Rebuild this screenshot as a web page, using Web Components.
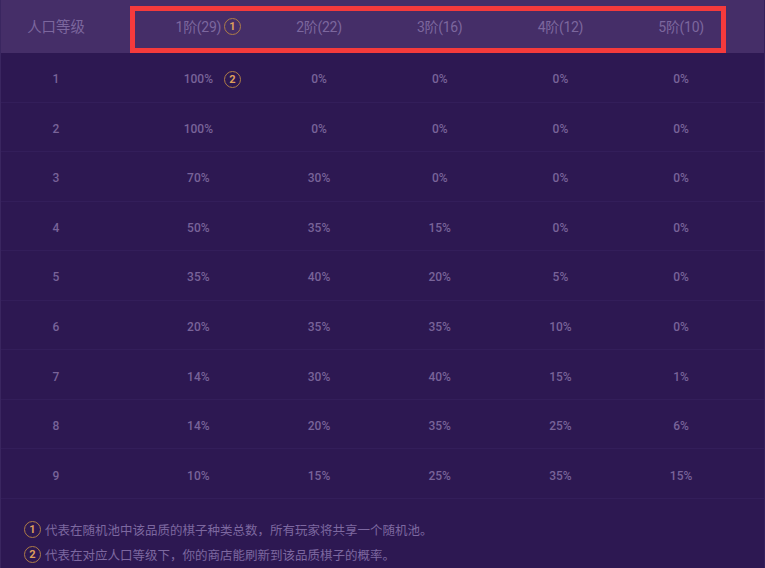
<!DOCTYPE html>
<html>
<head>
<meta charset="utf-8">
<style>
  html, body { margin: 0; padding: 0; background: #2c1850; }
  body { width: 765px; height: 568px; overflow: hidden; font-family: "Roboto", "Noto Sans CJK SC", sans-serif; }
</style>
</head>
<body>
<odds-table>
  <num-badge slot="head-mark">1</num-badge>
  <num-badge slot="cell-mark">2</num-badge>
  <odds-note><num-badge slot="mark">1</num-badge>代表在随机池中该品质的棋子种类总数，所有玩家将共享一个随机池。</odds-note>
  <odds-note><num-badge slot="mark">2</num-badge>代表在对应人口等级下，你的商店能刷新到该品质棋子的概率。</odds-note>
</odds-table>

<script>
const badgeTpl = document.createElement('template');
badgeTpl.innerHTML = `
  <style>
    :host {
      display: inline-flex;
      align-items: center;
      justify-content: center;
      box-sizing: border-box;
      width: 17px;
      height: 17px;
      border: 1.5px solid #ad7c48;
      border-radius: 50%;
      color: #dd9f5c;
      font: 700 11px/1 "Roboto", sans-serif;
    }
  </style>
  <slot></slot>
`;
class NumBadge extends HTMLElement {
  constructor() {
    super();
    this.attachShadow({ mode: 'open' });
    this.shadowRoot.appendChild(badgeTpl.content.cloneNode(true));
  }
}
customElements.define('num-badge', NumBadge);

const noteTpl = document.createElement('template');
noteTpl.innerHTML = `
  <style>
    :host {
      display: flex;
      align-items: center;
      gap: 4px;
      height: 25px;
      padding-left: 24px;
      color: #7d68a0;
      font: 12.5px/1 "Noto Sans CJK SC", sans-serif;
      white-space: nowrap;
    }
  </style>
  <slot name="mark"></slot>
  <span><slot></slot></span>
`;
class OddsNote extends HTMLElement {
  constructor() {
    super();
    this.attachShadow({ mode: 'open' });
    this.shadowRoot.appendChild(noteTpl.content.cloneNode(true));
  }
}
customElements.define('odds-note', OddsNote);

const heads = ['1阶(29)', '2阶(22)', '3阶(16)', '4阶(12)', '5阶(10)'];
const odds = [
  ['100%', '0%', '0%', '0%', '0%'],
  ['100%', '0%', '0%', '0%', '0%'],
  ['70%', '30%', '0%', '0%', '0%'],
  ['50%', '35%', '15%', '0%', '0%'],
  ['35%', '40%', '20%', '5%', '0%'],
  ['20%', '35%', '35%', '10%', '0%'],
  ['14%', '30%', '40%', '15%', '1%'],
  ['14%', '20%', '35%', '25%', '6%'],
  ['10%', '15%', '25%', '35%', '15%']
];

class OddsTable extends HTMLElement {
  constructor() {
    super();
    this.attachShadow({ mode: 'open' });
    const headCells = heads.map((h, i) =>
      `<div class="cell">${h}${i === 0 ? '<span class="mark"><slot name="head-mark"></slot></span>' : ''}</div>`
    ).join('');
    const rows = odds.map((r, n) => `
      <div class="row">
        <div class="cell lvl">${n + 1}</div>
        ${r.map((v, i) => `<div class="cell">${v}${n === 0 && i === 0 ? '<span class="mark"><slot name="cell-mark"></slot></span>' : ''}</div>`).join('')}
      </div>`).join('');
    this.shadowRoot.innerHTML = `
      <style>
        :host {
          display: block;
          position: relative;
          width: 765px;
          height: 568px;
          background: #2d1852;
        }
        .row, .head {
          display: grid;
          grid-template-columns: 138px repeat(5, 120.7px);
          align-items: center;
        }
        .head {
          height: 53px;
          background: #452e68;
          color: #7c679e;
          font: 14px/1 "Roboto", "Noto Sans CJK SC", sans-serif;
          letter-spacing: -0.3px;
        }
        .row {
          height: 49.55px;
          box-sizing: border-box;
          padding-top: 4px;
          border-bottom: 1px solid #331e5a;
          color: #786399;
          font: 500 12px/1 "Roboto", "Noto Sans CJK SC", sans-serif;
        }
        .cell { position: relative; text-align: center; }
        .lvl, .head .first { padding-right: 26px; }
        .head .first { font-size: 14.4px; letter-spacing: 0; padding-top: 3px; }
        .mark { position: absolute; left: 86px; top: 50%; margin-top: -8.5px; display: flex; letter-spacing: 0; }
        .notes { padding-top: 18.5px; }
        .edge {
          position: absolute;
          inset: 0;
          border-left: 1px solid #3a2660;
          border-right: 1px solid #35205c;
        }
        .hilite {
          position: absolute;
          left: 130px;
          top: 6px;
          width: 596px;
          height: 47px;
          box-sizing: border-box;
          border: 5.5px solid #f53a3c;
        }
      </style>
      <div class="head">
        <div class="cell first">人口等级</div>
        ${headCells}
      </div>
      ${rows}
      <div class="notes"><slot></slot></div>
      <div class="edge"></div>
      <div class="hilite"></div>
    `;
  }
}
customElements.define('odds-table', OddsTable);
</script>
</body>
</html>
